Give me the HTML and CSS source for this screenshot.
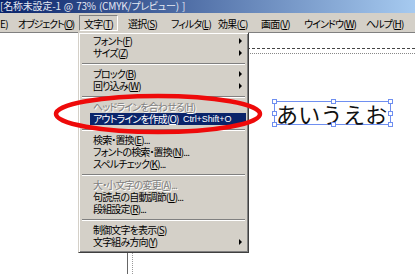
FILE: index.html
```html
<!DOCTYPE html>
<html lang="ja">
<head>
<meta charset="utf-8">
<link rel="stylesheet" href="styles.css">
</head>
<body>
<div class="app">
  <div class="titlebar">[名称未設定-1 @ 73% (CMYK/プレビュー) ]</div>
  <div class="menubar">
    <span class="mi mi-edit">E)</span>
    <span class="mi mi-obj">オブジェクト(<u>O</u>)</span>
    <span class="mi mi-text pressed">文字(<u>T</u>)</span>
    <span class="mi mi-sel">選択(<u>S</u>)</span>
    <span class="mi mi-fil">フィルタ(<u>L</u>)</span>
    <span class="mi mi-eff">効果(<u>C</u>)</span>
    <span class="mi mi-view">画面(<u>V</u>)</span>
    <span class="mi mi-win">ウインドウ(<u>W</u>)</span>
    <span class="mi mi-help">ヘルプ(<u>H</u>)</span>
  </div>
  <div class="workspace">
    <div class="artboard"></div>
    <div class="pagearea"></div>
    <div class="textobj">
      <span class="textobj-text">あいうえお</span>
      <i class="h h-tl"></i><i class="h h-tm"></i><i class="h h-tr"></i>
      <i class="h h-ml"></i><i class="h h-mr"></i>
      <i class="h h-bl"></i><i class="h h-bm"></i><i class="h h-br"></i>
    </div>
    <div class="dropdown">
      <div class="item sub"><span>フォント(<u>F</u>)</span><i class="arrow"></i></div>
      <div class="item sub"><span>サイズ(<u>Z</u>)</span><i class="arrow"></i></div>
      <div class="sep"></div>
      <div class="item sub"><span>ブロック(<u>B</u>)</span><i class="arrow"></i></div>
      <div class="item sub"><span>回り込み(<u>W</u>)</span><i class="arrow"></i></div>
      <div class="sep"></div>
      <div class="item disabled"><span>ヘッドラインを合わせる(<u>H</u>)</span></div>
      <div class="item active"><span class="label">アウトラインを作成(<u>O</u>)</span><span class="shortcut">Ctrl+Shift+O</span></div>
      <div class="sep"></div>
      <div class="item"><span>検索・置換(<u>E</u>)...</span></div>
      <div class="item"><span>フォントの検索・置換(<u>N</u>)...</span></div>
      <div class="item"><span>スペルチェック(<u>K</u>)...</span></div>
      <div class="sep"></div>
      <div class="item disabled"><span>大・小文字の変更(<u>A</u>)...</span></div>
      <div class="item"><span>句読点の自動調節(<u>U</u>)...</span></div>
      <div class="item"><span>段組設定(<u>R</u>)...</span></div>
      <div class="sep"></div>
      <div class="item"><span>制御文字を表示(<u>S</u>)</span></div>
      <div class="item sub"><span>文字組み方向(<u>Y</u>)</span><i class="arrow"></i></div>
    </div>
  </div>
  <svg class="annot" width="415" height="274" viewBox="0 0 415 274">
    <ellipse cx="158" cy="114" rx="102" ry="18" fill="none" stroke="#ee0a0a" stroke-width="4.5"/>
  </svg>
</div>
</body>
</html>
```

FILE: styles.css
```css
html, body {
  margin: 0;
  padding: 0;
  background: #ffffff;
}
.app {
  position: relative;
  width: 415px;
  height: 274px;
  overflow: hidden;
  display: flex;
  flex-direction: column;
  font-family: "Noto Sans CJK JP", "Noto Sans", sans-serif;
  font-size: 10px;
  font-feature-settings: "palt";
  letter-spacing: -0.7px;
  color: #000;
}
u { text-decoration: underline; text-decoration-thickness: 1px; text-underline-offset: 1px; }

.titlebar {
  height: 13px;
  line-height: 12px;
  background: linear-gradient(to right, #0a246a, #a6caf0);
  color: #e4e8f2;
  white-space: nowrap;
  letter-spacing: -0.2px;
  word-spacing: 1px;
}

.menubar {
  height: 19px;
  background: #d4d0c8;
  border-bottom: 1px solid #808080;
  display: flex;
  align-items: center;
  white-space: nowrap;
}
.mi {
  flex: none;
  height: 16px;
  line-height: 15px;
  box-sizing: border-box;
  padding: 0 0 0 4px;
  border: 1px solid transparent;
  overflow: visible;
}
.mi-edit { width: 13px; padding-left: 0; border-left: 0; }
.mi-obj { width: 66px; letter-spacing: -1.2px; }
.mi-text { width: 39px; margin-right: 5px; }
.mi-sel { width: 43px; }
.mi-fil { width: 47px; letter-spacing: -0.9px; }
.mi-eff { width: 43px; }
.mi-view { width: 43px; }
.mi-win { width: 62px; letter-spacing: -0.9px; }
.mi-help { width: 39px; letter-spacing: -0.9px; }
.mi.pressed {
  border-color: #808080 #ffffff #ffffff #808080;
}

.workspace {
  position: relative;
  flex: 1;
  background: #ffffff;
}
.artboard {
  position: absolute;
  left: 127px;
  top: 15px;
  right: -10px;
  bottom: -10px;
  border-top: 1px dashed #444;
  border-left: 1px solid #666;
}
.pagearea {
  position: absolute;
  left: 132px;
  top: 20px;
  right: -10px;
  bottom: -10px;
  border-top: 1px dotted #888;
  border-left: 1px dotted #999;
}

.textobj {
  position: absolute;
  left: 274px;
  top: 68px;
  width: 117px;
  height: 24px;
  box-sizing: border-box;
  border: 1px solid #6f8ff0;
  padding-left: 1px;
}
.textobj-text {
  display: block;
  font-size: 22px;
  line-height: 22px;
  letter-spacing: 0.3px;
  white-space: nowrap;
  font-feature-settings: normal;
  color: #111;
}
.h {
  position: absolute;
  width: 3px;
  height: 3px;
  background: #fff;
  border: 1px solid #6f8ff0;
}
.h-tl { left: -3px; top: -3px; }
.h-tm { left: 56px; top: -3px; }
.h-tr { right: -3px; top: -3px; }
.h-ml { left: -3px; top: 9px; }
.h-mr { right: -3px; top: 9px; }
.h-bl { left: -3px; bottom: -3px; }
.h-bm { left: 56px; bottom: -3px; }
.h-br { right: -3px; bottom: -3px; }

.dropdown {
  position: absolute;
  left: 78px;
  top: -1px;
  width: 171px;
  height: 221px;
  box-sizing: border-box;
  background: #d4d0c8;
  border: 1px solid;
  border-color: #d4d0c8 #404040 #404040 #d4d0c8;
  box-shadow: inset 1px 1px 0 #ffffff, inset -1px -1px 0 #808080;
  padding: 2px 2px;
  letter-spacing: -0.85px;
}
.item {
  height: 12px;
  line-height: 12px;
  display: flex;
  align-items: center;
  justify-content: space-between;
  padding: 0 4px 0 12px;
  white-space: nowrap;
}
.item.disabled {
  color: #808080;
  text-shadow: 1px 1px 0 #ffffff;
}
.item.active {
  background: #0a246a;
  color: #ffffff;
  justify-content: flex-start;
  margin-left: 9px;
  padding-left: 3px;
}
.item .label { width: 90px; flex: none; }
.shortcut {
  font-family: "Liberation Sans", Arial, sans-serif;
  font-size: 9px;
  letter-spacing: -0.1px;
}
.arrow {
  width: 0;
  height: 0;
  border-top: 3px solid transparent;
  border-bottom: 3px solid transparent;
  border-left: 3px solid #000;
}
.sep {
  height: 9px;
  position: relative;
}
.sep::before {
  content: "";
  position: absolute;
  left: 1px;
  right: 1px;
  top: 4px;
  height: 1px;
  background: #808080;
  border-bottom: 1px solid #ffffff;
}

.annot {
  position: absolute;
  left: 0;
  top: 0;
  pointer-events: none;
}
```
